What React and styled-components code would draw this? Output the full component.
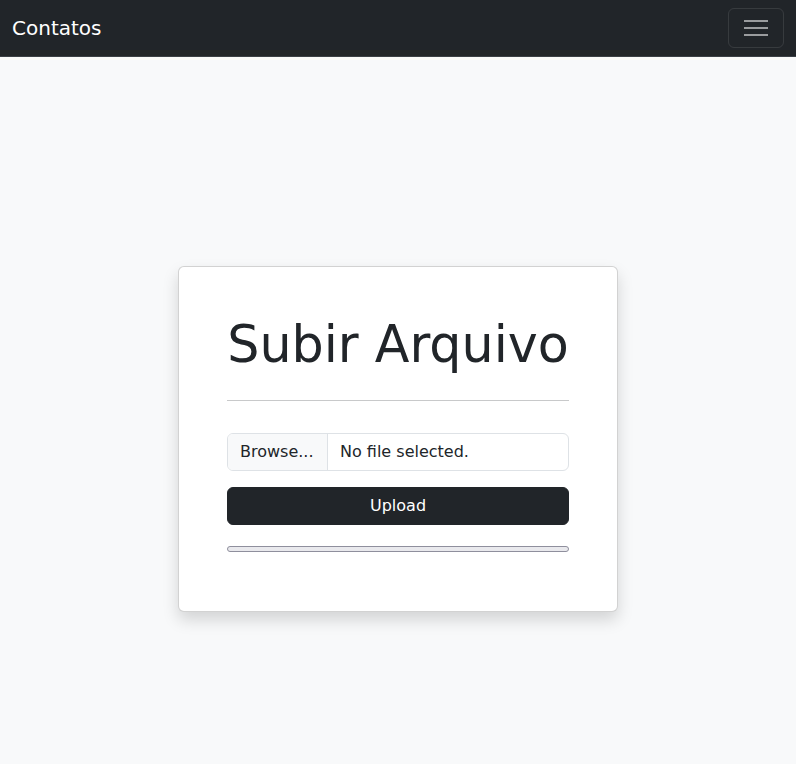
import React from 'react';
import styled, { createGlobalStyle } from 'styled-components';

const GlobalStyle = createGlobalStyle`
  * { box-sizing: border-box; }
  body {
    margin: 0;
    background-color: #f8f9fa;
    color: #212529;
    font-family: "DejaVu Sans", "Liberation Sans", sans-serif;
    font-size: 16px;
    line-height: 1.5;
  }
`;

const Navbar = styled.nav`
  height: 57px;
  background-color: #212529;
  border-bottom: 1px solid #3a3f46;
  display: flex;
  align-items: center;
  justify-content: space-between;
  padding: 0 12px;
`;

const Brand = styled.a`
  color: #fff;
  font-size: 20px;
  line-height: 30px;
  text-decoration: none;
`;

const Toggler = styled.button`
  width: 56px;
  height: 40px;
  background: transparent;
  border: 1px solid rgba(255, 255, 255, 0.1);
  border-radius: 6px;
  display: flex;
  align-items: center;
  justify-content: center;
  padding: 0;
  cursor: pointer;
`;

const Main = styled.main`
  display: flex;
  justify-content: center;
  padding: 209px 0 120px;
`;

const Card = styled.div`
  width: 440px;
  background: #fff;
  border: 1px solid rgba(0, 0, 0, 0.175);
  border-radius: 6px;
  box-shadow: 0 8px 16px rgba(0, 0, 0, 0.15);
  padding: 48px 48px 59px;
`;

const Title = styled.h1`
  margin: 0;
  font-size: 50.7px;
  font-weight: 400;
  line-height: 1.2;
  text-align: center;
  color: #212529;
  white-space: nowrap;
`;

const Divider = styled.hr`
  margin: 24px 0 32px;
  border: 0;
  border-top: 1px solid #c8c9ca;
`;

const FileField = styled.label`
  display: flex;
  height: 38px;
  border: 1px solid #dee2e6;
  border-radius: 6px;
  overflow: hidden;
  margin-bottom: 16px;
  cursor: pointer;
`;

const FileButton = styled.span`
  width: 100px;
  flex-shrink: 0;
  background: #f8f9fa;
  border-right: 1px solid #dee2e6;
  padding: 6px 12px;
  color: #212529;
`;

const FileName = styled.span`
  padding: 6px 12px;
  color: #212529;
`;

const UploadButton = styled.button`
  display: block;
  width: 100%;
  height: 38px;
  background: #212529;
  color: #fff;
  border: 1px solid #212529;
  border-radius: 6px;
  font-family: inherit;
  font-size: 16px;
  cursor: pointer;
  margin-bottom: 21px;
`;

const Progress = styled.div`
  height: 6px;
  background: #e9e9ed;
  border: 1px solid #8f8f9d;
  border-radius: 3px;
`;

function MenuIcon() {
  return (
    <svg width="26" height="20" viewBox="0 0 26 20">
      <g stroke="rgba(255,255,255,0.55)" strokeWidth="2">
        <line x1="1" y1="3" x2="25" y2="3" />
        <line x1="1" y1="10" x2="25" y2="10" />
        <line x1="1" y1="17" x2="25" y2="17" />
      </g>
    </svg>
  );
}

export default function App() {
  return (
    <>
      <GlobalStyle />
      <Navbar>
        <Brand href="#">Contatos</Brand>
        <Toggler aria-label="Toggle navigation">
          <MenuIcon />
        </Toggler>
      </Navbar>
      <Main>
        <Card>
          <Title>Subir Arquivo</Title>
          <Divider />
          <FileField>
            <FileButton>Browse...</FileButton>
            <FileName>No file selected.</FileName>
          </FileField>
          <UploadButton>Upload</UploadButton>
          <Progress />
        </Card>
      </Main>
    </>
  );
}
